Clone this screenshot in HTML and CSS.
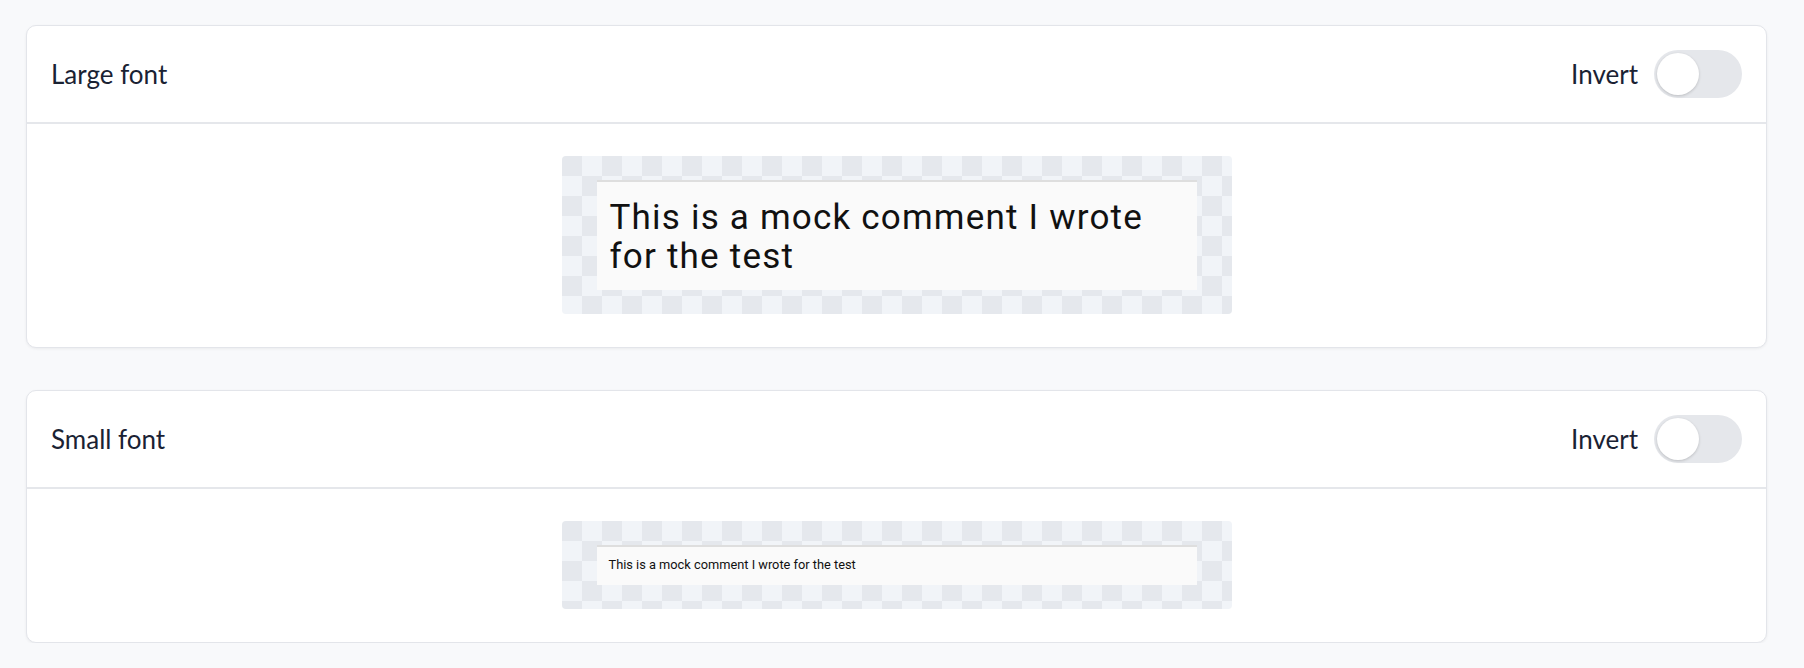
FILE: index.html
```html
<!DOCTYPE html>
<html lang="en">
<head>
    <meta charset="UTF-8">
    <meta name="viewport" content="width=device-width, initial-scale=1.0">
    <title>Comment previews</title>
    <link rel="stylesheet" href="styles.css">
</head>
<body>
    <div class="page">
        <section class="card">
            <header class="card-header">
                <h2 class="card-title">Large font</h2>
                <label class="invert">
                    <span>Invert</span>
                    <span class="toggle"><span class="knob"></span></span>
                </label>
            </header>
            <div class="card-body">
                <div class="preview">
                    <div class="comment comment-large">This is a mock comment I wrote for the test</div>
                </div>
            </div>
        </section>
        <section class="card">
            <header class="card-header">
                <h2 class="card-title">Small font</h2>
                <label class="invert">
                    <span>Invert</span>
                    <span class="toggle"><span class="knob"></span></span>
                </label>
            </header>
            <div class="card-body">
                <div class="preview">
                    <div class="comment comment-small">This is a mock comment I wrote for the test</div>
                </div>
            </div>
        </section>
    </div>
</body>
</html>
```

FILE: styles.css
```css
/* Page */
body {
    margin: 0;
    background: #f8f9fb;
    font-family: Lato, "Noto Sans", sans-serif;
    color: #1a2233;
}
.page {
    display: flex;
    flex-direction: column;
    gap: 42px;
    padding: 25px 37px 0 26px;
}
/* Cards */
.card {
    background: #fff;
    border: 1px solid #e3e5ea;
    border-radius: 10px;
    box-shadow: 0 1px 3px rgba(0, 0, 0, 0.06);
}
.card-header {
    display: flex;
    align-items: center;
    justify-content: space-between;
    padding: 24px;
    border-bottom: 2px solid #e5e7eb;
}
.card-title {
    margin: 0;
    font-size: 26px;
    font-weight: 400;
}
/* Invert switch */
.invert {
    display: flex;
    align-items: center;
    gap: 16px;
    font-size: 26px;
}
.toggle {
    width: 88px;
    height: 48px;
    border-radius: 24px;
    background: #e5e7eb;
    display: flex;
    align-items: center;
    padding-left: 3px;
    box-sizing: border-box;
}
.knob {
    width: 42px;
    height: 42px;
    border-radius: 50%;
    background: #fff;
    box-shadow: 0 1px 3px rgba(0, 0, 0, 0.18);
}
/* Preview */
.card-body {
    display: flex;
    justify-content: center;
    padding: 32px 0 33px;
}
.preview {
    width: 670px;
    padding: 24px 35px;
    box-sizing: border-box;
    border-radius: 4px;
    background-color: #f1f4f8;
    background-image:
        linear-gradient(45deg, #e5e8ed 25%, transparent 25%, transparent 75%, #e5e8ed 75%),
        linear-gradient(45deg, #e5e8ed 25%, transparent 25%, transparent 75%, #e5e8ed 75%);
    background-size: 40px 40px;
    background-position: 20px 0, 0 20px;
}
.comment {
    background: #fafafa;
    border-top: 2px solid #dedede;
    font-family: Roboto, sans-serif;
    color: #111;
}
.comment-large {
    font-size: 35px;
    line-height: 39px;
    letter-spacing: 1.2px;
    padding: 16px 13px 14px;
}
.comment-small {
    font-size: 12.8px;
    line-height: 16px;
    padding: 10px 12px 12px;
}
```
